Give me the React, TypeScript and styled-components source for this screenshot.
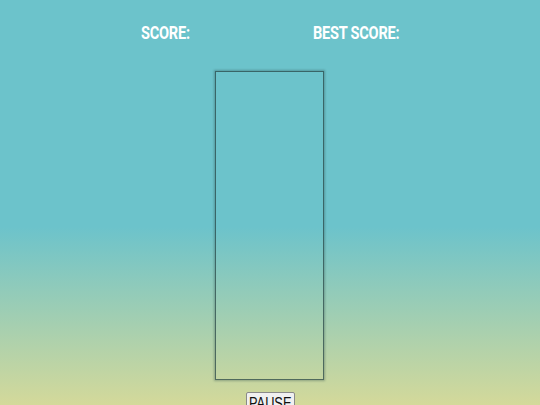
import React from "react";
import styled, { createGlobalStyle } from "styled-components";

const Global = createGlobalStyle`
  html, body { margin: 0; padding: 0; height: 100%; }
  body {
    background: linear-gradient(to bottom, #6cc3cb 0%, #6cc3cb 56%, #d4d99a 100%);
    overflow: hidden;
  }
  #root { height: 100%; }
`;

const Page = styled.div`
  height: 405px;
  overflow: hidden;
  display: flex;
  flex-direction: column;
  align-items: center;
  & > * { flex-shrink: 0; }
`;

const Header = styled.div`
  display: flex;
  justify-content: center;
  gap: 124px;
  padding-top: 22px;
  height: 71px;
  box-sizing: border-box;
`;

const Label = styled.div<{ w: number }>`
  color: #ffffff;
  font-family: Roboto, "Liberation Sans", sans-serif;
  font-weight: 700;
  font-size: 18px;
  line-height: 21px;
  letter-spacing: -0.3px;
  display: inline-block;
  width: ${(p) => p.w}px;
  white-space: nowrap;
`;

const Squeeze = styled.span`
  display: inline-block;
  transform: scaleX(0.81);
  transform-origin: left center;
`;

const Board = styled.div`
  width: 109px;
  height: 309px;
  margin-right: 1px;
  box-sizing: border-box;
  border: 1px solid rgba(40, 70, 70, 0.75);
  box-shadow: 0 0 2px 1px rgba(40, 70, 70, 0.35);
`;

const PauseButton = styled.button`
  margin-top: 12px;
  font-family: "Liberation Sans", Arial, sans-serif;
  font-size: 16px;
  line-height: 18px;
  color: #111;
  background: #f0f0f0;
  border: 1px solid #8a8a8a;
  border-radius: 2px;
  padding: 2px 0 2px 0;
  width: 49px;
  text-align: left;
  cursor: pointer;
`;

const ButtonText = styled.span`
  display: inline-block;
  transform: scaleX(0.8);
  transform-origin: left center;
  margin-left: 2px;
`;

export default function App() {
  return (
    <>
      <Global />
      <Page>
        <Header>
          <Label w={48}>
            <Squeeze>SCORE:</Squeeze>
          </Label>
          <Label w={86}>
            <Squeeze>BEST SCORE:</Squeeze>
          </Label>
        </Header>
        <Board />
        <PauseButton>
          <ButtonText>PAUSE</ButtonText>
        </PauseButton>
      </Page>
    </>
  );
}
